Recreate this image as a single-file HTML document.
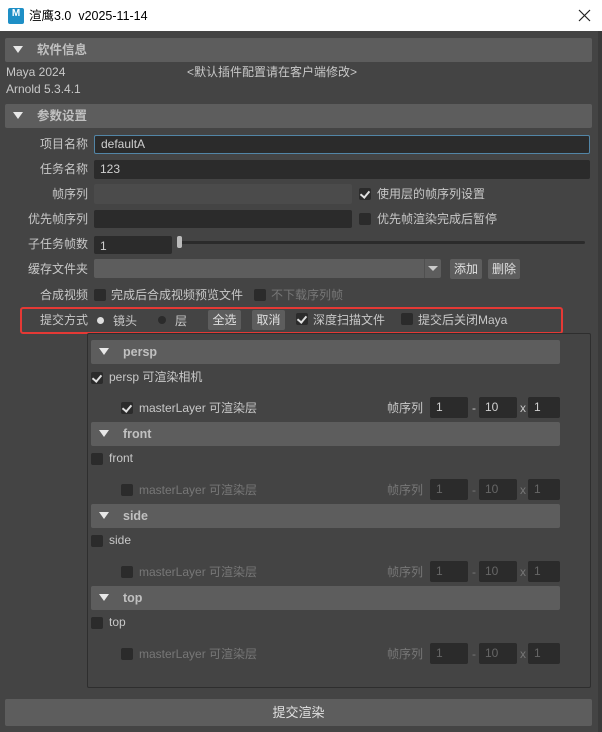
<!DOCTYPE html>
<html><head><meta charset="utf-8"><style>
*{box-sizing:border-box;margin:0;padding:0}
body{width:602px;height:732px;background:#444;position:relative;overflow:hidden;font-family:"Liberation Sans","Noto Sans CJK SC",sans-serif;font-size:12px;color:#c8c8c8}
.a{position:absolute;white-space:nowrap}
.t{line-height:16px}
.hdr{position:absolute;background:#5d5d5d;border-radius:2px}
.hdr .tri{position:absolute;left:8px;top:8px;width:0;height:0;border-left:5px solid transparent;border-right:5px solid transparent;border-top:7px solid #e8e8e8}
.hdr span{position:absolute;left:32px;top:4px;font-weight:bold;color:#c0c0c0;font-size:12.5px;line-height:16px}
.in{position:absolute;background:#2b2b2b;border-radius:2px;color:#d0d0d0;padding-left:6px;line-height:18px}
.cb{position:absolute;width:12px;height:12px;background:#2b2b2b;border-radius:2px}
.cb.on::after{content:"";position:absolute;left:3px;top:1px;width:4px;height:7px;border:solid #e0e0e0;border-width:0 2px 2px 0;transform:rotate(40deg)}
.btn{position:absolute;background:#5d5d5d;border-radius:2px;color:#e0e0e0;text-align:center;line-height:20px}
.lbl{position:absolute;text-align:right;width:88px;left:0;line-height:16px}
.dim{color:#777}
.din{background:#2b2b2b;color:#666}
</style></head><body>
<div class="a" style="left:0;top:0;width:602px;height:31px;background:#fff"></div>
<div class="a" style="left:8px;top:8px;width:16px;height:16px;background:#1e8fc6;border-radius:2px;color:#fff;font-size:10px;font-weight:bold;text-align:center;line-height:12px">M</div>
<div class="a t" style="left:29px;top:8px;color:#000;font-size:12.5px">渲鹰3.0&nbsp; v2025-11-14</div>
<svg class="a" style="left:578px;top:9px" width="13" height="13"><path d="M1 1L12 12M12 1L1 12" stroke="#222" stroke-width="1.2"/></svg>
<div class="a" style="left:598px;top:31px;width:4px;height:701px;background:#3a3a3a"></div>

<div class="hdr" style="left:5px;top:38px;width:587px;height:24px"><div class="tri"></div><span>软件信息</span></div>
<div class="a t" style="left:6px;top:64px">Maya 2024</div>
<div class="a t" style="left:6px;top:81px">Arnold 5.3.4.1</div>
<div class="a t" style="left:187px;top:64px">&lt;默认插件配置请在客户端修改&gt;</div>
<div class="hdr" style="left:5px;top:104px;width:587px;height:24px"><div class="tri"></div><span>参数设置</span></div>

<div class="lbl" style="top:136px">项目名称</div>
<div class="in" style="left:94px;top:135px;width:496px;height:19px;border:1px solid #5285a6;line-height:17px">defaultA</div>
<div class="lbl" style="top:161px">任务名称</div>
<div class="in" style="left:94px;top:160px;width:496px;height:19px">123</div>
<div class="lbl" style="top:186px">帧序列</div>
<div class="in" style="left:94px;top:184px;width:258px;height:20px;background:#4b4b4b"></div>
<div class="cb on" style="left:359px;top:188px"></div>
<div class="a t" style="left:377px;top:186px">使用层的帧序列设置</div>
<div class="lbl" style="top:211px">优先帧序列</div>
<div class="in" style="left:94px;top:210px;width:258px;height:18px"></div>
<div class="cb" style="left:359px;top:213px"></div>
<div class="a t" style="left:377px;top:211px">优先帧渲染完成后暂停</div>
<div class="lbl" style="top:236px">子任务帧数</div>
<div class="in" style="left:94px;top:236px;width:78px;height:18px;line-height:20px">1</div>
<div class="a" style="left:177px;top:241px;width:408px;height:3px;background:#2b2b2b;border-radius:2px"></div>
<div class="a" style="left:177px;top:236px;width:5px;height:12px;background:#bbb;border-radius:2px"></div>
<div class="lbl" style="top:261px">缓存文件夹</div>
<div class="a" style="left:94px;top:259px;width:347px;height:19px;background:#5d5d5d;border-radius:2px"></div>
<div class="a" style="left:424px;top:259px;width:1px;height:19px;background:#4f4f4f"></div>
<div class="a" style="left:428px;top:266px;width:0;height:0;border-left:5px solid transparent;border-right:5px solid transparent;border-top:5px solid #ccc"></div>
<div class="btn" style="left:450px;top:259px;width:32px;height:20px">添加</div>
<div class="btn" style="left:488px;top:259px;width:32px;height:20px">删除</div>
<div class="lbl" style="top:287px">合成视频</div>
<div class="cb" style="left:94px;top:289px"></div>
<div class="a t" style="left:111px;top:287px">完成后合成视频预览文件</div>
<div class="cb" style="left:254px;top:289px"></div>
<div class="a t dim" style="left:271px;top:287px">不下载序列帧</div>

<div class="a" style="left:20px;top:307px;width:543px;height:27px;border:2px solid #e53935;border-radius:3px"></div>
<div class="a t" style="left:40px;top:312px">提交方式</div>
<div class="a" style="left:97px;top:317px;width:7px;height:7px;border-radius:50%;background:#ddd"></div>
<div class="a t" style="left:113px;top:313px">镜头</div>
<div class="a" style="left:158px;top:316px;width:8px;height:8px;border-radius:50%;background:#2b2b2b"></div>
<div class="a t" style="left:175px;top:313px">层</div>
<div class="btn" style="left:208px;top:310px;width:33px;height:20px">全选</div>
<div class="btn" style="left:252px;top:310px;width:33px;height:20px">取消</div>
<div class="cb on" style="left:296px;top:313px"></div>
<div class="a t" style="left:313px;top:312px">深度扫描文件</div>
<div class="cb" style="left:401px;top:313px"></div>
<div class="a t" style="left:418px;top:312px">提交后关闭Maya</div>

<div class="a" style="left:87px;top:333px;width:504px;height:355px;border:1px solid #2e2e2e;border-radius:2px"></div>

<!-- persp -->
<div class="hdr" style="left:91px;top:340px;width:469px;height:24px"><div class="tri"></div><span>persp</span></div>
<div class="cb on" style="left:91px;top:372px"></div><div class="a t" style="left:109px;top:369px">persp 可渲染相机</div>
<div class="cb on" style="left:121px;top:402px"></div><div class="a t" style="left:139px;top:400px">masterLayer 可渲染层</div>
<div class="a t" style="left:387px;top:400px">帧序列</div>
<div class="in" style="left:430px;top:397px;width:38px;height:21px;line-height:21px">1</div><div class="a t" style="left:472px;top:400px">-</div>
<div class="in" style="left:479px;top:397px;width:38px;height:21px;line-height:21px">10</div><div class="a t" style="left:520px;top:400px">x</div>
<div class="in" style="left:528px;top:397px;width:32px;height:21px;line-height:21px">1</div>

<div class="hdr" style="left:91px;top:422px;width:469px;height:24px"><div class="tri"></div><span>front</span></div>
<div class="cb" style="left:91px;top:453px"></div><div class="a t" style="left:109px;top:450px">front</div>
<div class="cb" style="left:121px;top:484px"></div><div class="a t dim" style="left:139px;top:482px">masterLayer 可渲染层</div>
<div class="a t dim" style="left:387px;top:482px">帧序列</div>
<div class="in din" style="left:430px;top:479px;width:38px;height:21px;line-height:21px">1</div><div class="a t dim" style="left:472px;top:482px">-</div>
<div class="in din" style="left:479px;top:479px;width:38px;height:21px;line-height:21px">10</div><div class="a t dim" style="left:520px;top:482px">x</div>
<div class="in din" style="left:528px;top:479px;width:32px;height:21px;line-height:21px">1</div>

<div class="hdr" style="left:91px;top:504px;width:469px;height:24px"><div class="tri"></div><span>side</span></div>
<div class="cb" style="left:91px;top:535px"></div><div class="a t" style="left:109px;top:532px">side</div>
<div class="cb" style="left:121px;top:566px"></div><div class="a t dim" style="left:139px;top:564px">masterLayer 可渲染层</div>
<div class="a t dim" style="left:387px;top:564px">帧序列</div>
<div class="in din" style="left:430px;top:561px;width:38px;height:21px;line-height:21px">1</div><div class="a t dim" style="left:472px;top:564px">-</div>
<div class="in din" style="left:479px;top:561px;width:38px;height:21px;line-height:21px">10</div><div class="a t dim" style="left:520px;top:564px">x</div>
<div class="in din" style="left:528px;top:561px;width:32px;height:21px;line-height:21px">1</div>

<div class="hdr" style="left:91px;top:586px;width:469px;height:24px"><div class="tri"></div><span>top</span></div>
<div class="cb" style="left:91px;top:617px"></div><div class="a t" style="left:109px;top:614px">top</div>
<div class="cb" style="left:121px;top:648px"></div><div class="a t dim" style="left:139px;top:646px">masterLayer 可渲染层</div>
<div class="a t dim" style="left:387px;top:646px">帧序列</div>
<div class="in din" style="left:430px;top:643px;width:38px;height:21px;line-height:21px">1</div><div class="a t dim" style="left:472px;top:646px">-</div>
<div class="in din" style="left:479px;top:643px;width:38px;height:21px;line-height:21px">10</div><div class="a t dim" style="left:520px;top:646px">x</div>
<div class="in din" style="left:528px;top:643px;width:32px;height:21px;line-height:21px">1</div>

<div class="btn" style="left:5px;top:699px;width:587px;height:27px;line-height:27px;font-size:13px">提交渲染</div>
</body></html>
